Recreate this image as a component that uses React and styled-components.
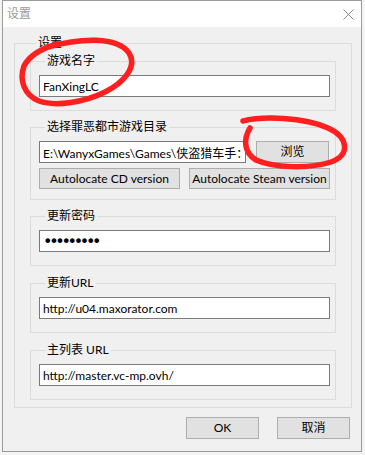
import React from "react";
import styled, { createGlobalStyle } from "styled-components";

const FONT = '"Lato", "Noto Sans CJK SC", sans-serif';

const GlobalStyle = createGlobalStyle`
  body {
    margin: 0;
    background: #f4f4f4;
    font-family: ${FONT};
    font-size: 12px;
    color: #000;
  }
`;

function App() {
  return (
    <Stage>
      <GlobalStyle />
      <Window>
        <TitleBar>
          <Title>设置</Title>
          <CloseIcon width="11" height="11" viewBox="0 0 11 11">
            <path d="M0.5 0.5 L10.5 10.5 M10.5 0.5 L0.5 10.5" stroke="#8a8a8a" strokeWidth="1" />
          </CloseIcon>
        </TitleBar>

        <Body>
          <OuterGroup>
            <Caption>设置</Caption>

            <Group $top={0}>
              <Caption>游戏名字</Caption>
              <Field defaultValue="FanXingLC" />
            </Group>

            <Group $top={8} $bottom={10}>
              <Caption>选择罪恶都市游戏目录</Caption>
              <Row>
                <Field defaultValue="E:\WanyxGames\Games\侠盗猎车手：罪恶都市" $width="207px" />
                <Button $width="73px" $height="22px">浏览</Button>
              </Row>
              <Row $top="5px">
                <Button $width="141px" $height="21px">Autolocate CD version</Button>
                <Button $width="141px" $height="21px">Autolocate Steam version</Button>
              </Row>
            </Group>

            <Group $top={8}>
              <Caption>更新密码</Caption>
              <Field type="password" defaultValue="123456789" $dots />
            </Group>

            <Group $top={9}>
              <Caption>更新URL</Caption>
              <Field defaultValue="http://u04.maxorator.com" />
            </Group>

            <Group $top={9}>
              <Caption>主列表 URL</Caption>
              <Field defaultValue="http://master.vc-mp.ovh/" />
            </Group>
          </OuterGroup>

          <Footer>
            <Button $width="73px" $height="22px">OK</Button>
            <Button $width="73px" $height="22px">取消</Button>
          </Footer>
        </Body>
      </Window>

      {/* hand drawn red marks over the screenshot */}
      <Marks width="365" height="455" viewBox="0 0 365 455">
        <path
          d="M48 47 C80 38, 117 36, 129 53 C138 67, 123 83, 105 92 C85 102, 56 107, 39 101 C24 95, 19 80, 24 66 C29 56, 40 49, 57 44"
        />
        <path
          d="M243 121 C262 116, 304 117, 328 128 C348 137, 351 155, 331 162 C309 169, 274 168, 256 160 C244 153, 243 139, 250 128"
        />
      </Marks>
    </Stage>
  );
}

export default App;

const Stage = styled.div`
  position: relative;
  width: 365px;
  height: 455px;
  padding-left: 2px;
  box-sizing: border-box;
`;

const Window = styled.div`
  width: 360px;
  height: 452px;
  box-sizing: border-box;
  border: 1px solid #9c9c9c;
  background: #f0f0f0;
  display: flex;
  flex-direction: column;
`;

const TitleBar = styled.div`
  height: 26px;
  flex-shrink: 0;
  background: #fff;
  display: flex;
  align-items: center;
  justify-content: space-between;
  padding: 0 7px 0 4px;
`;

const Title = styled.span`
  color: #9a9a9a;
  font-size: 12px;
  line-height: 16px;
`;

const CloseIcon = styled.svg`
  display: block;
`;

const Body = styled.div`
  flex: 1;
  display: flex;
  flex-direction: column;
  padding: 8px 9px 9px 11px;
`;

const OuterGroup = styled.fieldset`
  margin: 0;
  min-width: 0;
  border: 1px solid #dcdcdc;
  padding: 2px 15px 7px 15px;
`;

const Caption = styled.legend`
  margin-left: 6px;
  padding: 0 2px;
  font-size: 12px;
  line-height: 16px;
  color: #000;
`;

const Group = styled.fieldset`
  margin: ${(p) => p.$top}px 0 0 0;
  min-width: 0;
  border: 1px solid #dcdcdc;
  padding: 6px 5px ${(p) => (p.$bottom != null ? p.$bottom : 13)}px 8px;
`;

const Row = styled.div`
  display: flex;
  justify-content: space-between;
  align-items: flex-start;
  margin-top: ${(p) => p.$top || 0};
  padding-right: ${(p) => (p.$top ? "0" : "1px")};
`;

const Field = styled.input`
  display: block;
  box-sizing: border-box;
  width: ${(p) => p.$width || "100%"};
  height: 22px;
  margin: 0;
  border: 1px solid #7a7a7a;
  background: #fff;
  padding: 0 3px;
  font-family: ${(p) => (p.$dots ? '"DejaVu Sans", sans-serif' : FONT)};
  font-size: ${(p) => (p.$dots ? "16px" : "12px")};
  letter-spacing: ${(p) => (p.$dots ? "-3.3px" : "0")};
  color: #000;
  outline: none;
`;

const Button = styled.button`
  width: ${(p) => p.$width};
  height: ${(p) => p.$height};
  margin: 0;
  padding: 0;
  box-sizing: border-box;
  border: 1px solid #adadad;
  background: #e1e1e1;
  color: #000;
  font-family: ${FONT};
  font-size: 12px;
  line-height: 16px;
  white-space: nowrap;
`;

const Footer = styled.div`
  display: flex;
  justify-content: flex-end;
  gap: 18px;
  margin-top: 9px;
  padding-right: 2px;
`;

const Marks = styled.svg`
  position: absolute;
  top: 0;
  left: 0;
  pointer-events: none;

  path {
    fill: none;
    stroke: #ff1f1f;
    stroke-width: 5.5;
    stroke-linecap: round;
    stroke-linejoin: round;
  }
`;
